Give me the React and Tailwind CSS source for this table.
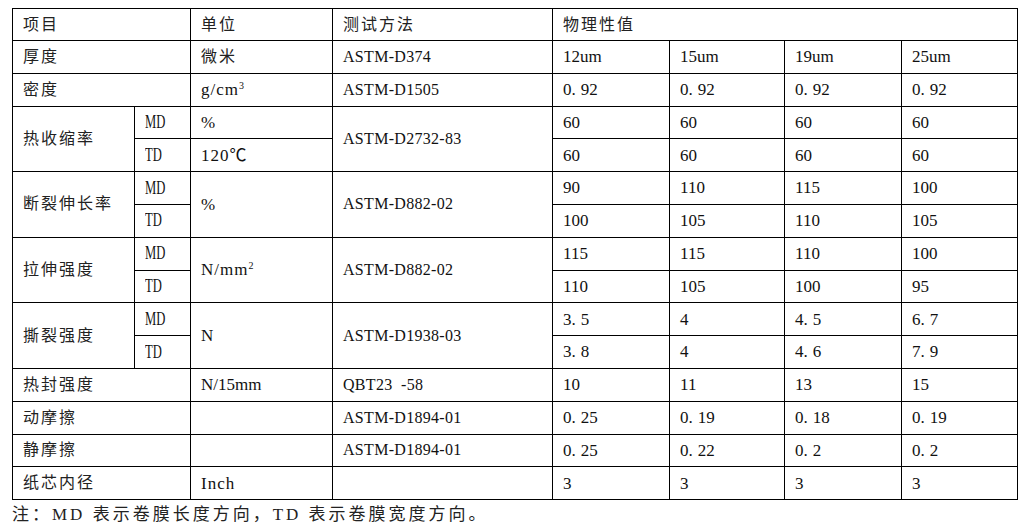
import React from "react";

const font = { fontFamily: '"Liberation Serif", "Noto Sans CJK SC", serif' };

// decimal values like 0.92 render with a wide point, as in the sheet
const Num = ({ v }) => {
  if (!v.includes(".")) return <span>{v}</span>;
  const [a, b] = v.split(".");
  return (
    <span>
      {a}
      <span className="mr-[5px]">.</span>
      {b}
    </span>
  );
};

const td = "border border-black pl-[10px] align-middle text-left";
const cn = "text-[16px] tracking-[2px] text-[#222]";
const en = "text-[17px] text-[#111]";
const astm = "text-[16px] tracking-[0.3px] text-[#111]";

const Dir = ({ t }) => (
  <td className={`${td} text-[18px] text-[#111]`}>
    <span className="inline-block scale-x-[0.7] origin-left">{t}</span>
  </td>
);

const Vals = ({ vals }) =>
  vals.map((v, i) => (
    <td key={i} className={`${td} ${en}`}>
      <Num v={v} />
    </td>
  ));

const row = "h-[32.8px]";

export default function App() {
  return (
    <div className="w-[1030px] h-[532px] bg-white overflow-hidden" style={font}>
      <div className="pt-[8px] pl-[12px]">
        <table className="table-fixed border-collapse w-[1005px]">
          <colgroup>
            <col className="w-[122px]" />
            <col className="w-[56px]" />
            <col className="w-[142px]" />
            <col className="w-[220px]" />
            <col className="w-[117px]" />
            <col className="w-[115px]" />
            <col className="w-[117px]" />
            <col className="w-[116px]" />
          </colgroup>
          <tbody>
            <tr className="h-[32px]">
              <td colSpan={2} className={`${td} ${cn}`}>项目</td>
              <td className={`${td} ${cn}`}>单位</td>
              <td className={`${td} ${cn}`}>测试方法</td>
              <td colSpan={4} className={`${td} ${cn}`}>物理性值</td>
            </tr>
            <tr className={row}>
              <td colSpan={2} className={`${td} ${cn}`}>厚度</td>
              <td className={`${td} ${cn}`}>微米</td>
              <td className={`${td} ${astm}`}>ASTM-D374</td>
              <Vals vals={["12um", "15um", "19um", "25um"]} />
            </tr>
            <tr className={row}>
              <td colSpan={2} className={`${td} ${cn}`}>密度</td>
              <td className={`${td} ${en} tracking-[1px]`}>
                g/cm<sup className="text-[10px] -top-[6px]">3</sup>
              </td>
              <td className={`${td} ${astm}`}>ASTM-D1505</td>
              <Vals vals={["0.92", "0.92", "0.92", "0.92"]} />
            </tr>

            <tr className={row}>
              <td rowSpan={2} className={`${td} ${cn}`}>热收缩率</td>
              <Dir t="MD" />
              <td className={`${td} ${en}`}>%</td>
              <td rowSpan={2} className={`${td} ${astm}`}>ASTM-D2732-83</td>
              <Vals vals={["60", "60", "60", "60"]} />
            </tr>
            <tr className={row}>
              <Dir t="TD" />
              <td className={`${td} ${en} tracking-[1px]`}>120℃</td>
              <Vals vals={["60", "60", "60", "60"]} />
            </tr>

            <tr className={row}>
              <td rowSpan={2} className={`${td} ${cn}`}>断裂伸长率</td>
              <Dir t="MD" />
              <td rowSpan={2} className={`${td} ${en}`}>%</td>
              <td rowSpan={2} className={`${td} ${astm}`}>ASTM-D882-02</td>
              <Vals vals={["90", "110", "115", "100"]} />
            </tr>
            <tr className={row}>
              <Dir t="TD" />
              <Vals vals={["100", "105", "110", "105"]} />
            </tr>

            <tr className={row}>
              <td rowSpan={2} className={`${td} ${cn}`}>拉伸强度</td>
              <Dir t="MD" />
              <td rowSpan={2} className={`${td} ${en} tracking-[1px]`}>
                N/mm<sup className="text-[10px] -top-[6px]">2</sup>
              </td>
              <td rowSpan={2} className={`${td} ${astm}`}>ASTM-D882-02</td>
              <Vals vals={["115", "115", "110", "100"]} />
            </tr>
            <tr className={row}>
              <Dir t="TD" />
              <Vals vals={["110", "105", "100", "95"]} />
            </tr>

            <tr className={row}>
              <td rowSpan={2} className={`${td} ${cn}`}>撕裂强度</td>
              <Dir t="MD" />
              <td rowSpan={2} className={`${td} ${en}`}>N</td>
              <td rowSpan={2} className={`${td} ${astm}`}>ASTM-D1938-03</td>
              <Vals vals={["3.5", "4", "4.5", "6.7"]} />
            </tr>
            <tr className={row}>
              <Dir t="TD" />
              <Vals vals={["3.8", "4", "4.6", "7.9"]} />
            </tr>

            <tr className={row}>
              <td colSpan={2} className={`${td} ${cn}`}>热封强度</td>
              <td className={`${td} ${en}`}>N/15mm</td>
              <td className={`${td} ${astm} whitespace-pre`}>QBT23  -58</td>
              <Vals vals={["10", "11", "13", "15"]} />
            </tr>
            <tr className={row}>
              <td colSpan={2} className={`${td} ${cn}`}>动摩擦</td>
              <td className={td}></td>
              <td className={`${td} ${astm}`}>ASTM-D1894-01</td>
              <Vals vals={["0.25", "0.19", "0.18", "0.19"]} />
            </tr>
            <tr className={row}>
              <td colSpan={2} className={`${td} ${cn}`}>静摩擦</td>
              <td className={td}></td>
              <td className={`${td} ${astm}`}>ASTM-D1894-01</td>
              <Vals vals={["0.25", "0.22", "0.2", "0.2"]} />
            </tr>
            <tr className={row}>
              <td colSpan={2} className={`${td} ${cn}`}>纸芯内径</td>
              <td className={`${td} ${en} tracking-[1px]`}>Inch</td>
              <td className={td}></td>
              <Vals vals={["3", "3", "3", "3"]} />
            </tr>
          </tbody>
        </table>
        <p className="mt-[3px] text-[17px] tracking-[3px] text-[#222] leading-[24px]">
          注：MD 表示卷膜长度方向，TD 表示卷膜宽度方向。
        </p>
      </div>
    </div>
  );
}
